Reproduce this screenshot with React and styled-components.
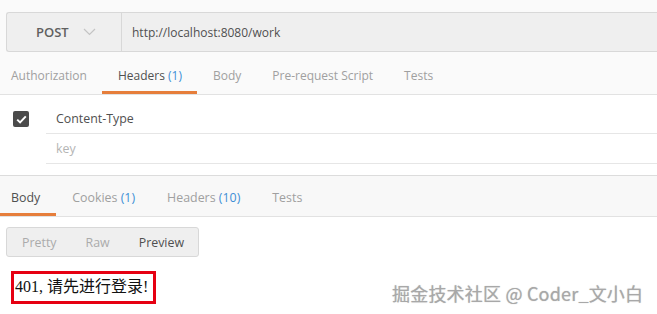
import React from "react";
import styled, { createGlobalStyle } from "styled-components";

const GlobalStyle = createGlobalStyle`
  html, body {
    margin: 0;
    padding: 0;
    background: #ffffff;
  }
  body {
    font-family: "Open Sans", "Noto Sans CJK SC", sans-serif;
    font-size: 12px;
    color: #505050;
  }
`;

const Page = styled.div`
  position: relative;
  width: 657px;
  height: 314px;
  overflow: hidden;
  background: #ffffff;
`;

const TopArea = styled.div`
  background: #fafafa;
  padding-top: 12px;
`;

const RequestBar = styled.div`
  display: flex;
  height: 38px;
  margin-left: 6px;
  background: #efefef;
  border-top: 1px solid #d8d8d8;
  border-bottom: 1px solid #d8d8d8;
  border-left: 1px solid #d8d8d8;
  border-radius: 3px 0 0 3px;
`;

const MethodSelect = styled.div`
  display: flex;
  align-items: center;
  gap: 14px;
  width: 115px;
  box-sizing: border-box;
  padding-left: 29px;
  border-right: 1px solid #d8d8d8;
  font-size: 13px;
  font-weight: 600;
  color: #606060;
`;

const UrlField = styled.div`
  display: flex;
  align-items: center;
  padding-left: 10px;
  font-size: 12px;
  color: #505050;
`;

const TabBar = styled.div`
  display: flex;
  margin-top: 3px;
  background: ${p => (p.$response ? "#f8f8f8" : "#fafafa")};
  border-top: ${p => (p.$response ? "1px solid #dcdcdc" : "none")};
  border-bottom: 1px solid #e2e2e2;
`;

const Tab = styled.div`
  padding: ${p => (p.$response ? "14px 16px 7px" : "13px 15.5px 7px")};
  line-height: 16px;
  font-size: ${p => (p.$response ? "12.4px" : "12px")};
  color: ${p => (p.$active ? "#505050" : "#a0a0a0")};
  border-bottom: 3px solid ${p => (p.$active ? "#e67e3b" : "transparent")};
  white-space: nowrap;

  &:first-child {
    padding-left: 11px;
  }
`;

const Count = styled.span`
  color: #3d8fd6;
`;

const HeaderTable = styled.div`
  margin-top: 9px;
`;

const HeaderRow = styled.div`
  display: flex;
  height: 30px;
`;

const CheckCell = styled.div`
  display: flex;
  align-items: center;
  width: 46px;
  padding-left: 13px;
  box-sizing: border-box;
`;

const Checkbox = styled.div`
  display: flex;
  align-items: center;
  justify-content: center;
  width: 16px;
  height: 16px;
  border-radius: 2px;
  background: #4b4b4b;
`;

const KeyCell = styled.div`
  flex: 1;
  display: flex;
  align-items: center;
  padding-left: 10px;
  border-bottom: 1px solid #e6e6e6;
  font-size: 12.4px;
  color: ${p => (p.$placeholder ? "#b4b4b4" : "#505050")};
`;

const ResponseArea = styled.div`
  margin-top: 11px;
`;

const ToggleGroup = styled.div`
  display: inline-flex;
  margin: 10px 0 0 6px;
  height: 28px;
  background: #efefef;
  border: 1px solid #d8d8d8;
  border-radius: 3px;
`;

const ToggleButton = styled.div`
  display: flex;
  align-items: center;
  padding: 0 14px 0 15px;
  font-size: 12.4px;
  color: ${p => (p.$active ? "#505050" : "#ababab")};
`;

const ResultBox = styled.div`
  display: inline-block;
  margin: 14px 0 0 11px;
  padding: 3px 5px 4px 1px;
  border: 3px solid #e60012;
  font-family: "Liberation Serif", "Noto Sans CJK SC", serif;
  font-size: 16px;
  line-height: 20px;
  color: #111111;
`;

const Watermark = styled.div`
  position: absolute;
  left: 392px;
  top: 281px;
  font-family: "Noto Sans CJK SC", sans-serif;
  font-size: 18px;
  line-height: 24px;
  letter-spacing: 0.2px;
  color: #a8a8a8;
  text-shadow: 0 0 1px rgba(90, 90, 90, 0.4);
`;

const Chevron = () => (
  <svg width="13" height="8" viewBox="0 0 13 8" fill="none">
    <path d="M1 1l5.5 5.5L12 1" stroke="#c4c4c4" strokeWidth="1.2" />
  </svg>
);

const Check = () => (
  <svg width="11" height="9" viewBox="0 0 11 9" fill="none">
    <path d="M1.2 4.6l2.9 2.8L9.8 1.4" stroke="#ffffff" strokeWidth="2" />
  </svg>
);

const requestTabs = [
  { label: "Authorization" },
  { label: "Headers", count: 1, active: true },
  { label: "Body" },
  { label: "Pre-request Script" },
  { label: "Tests" }
];

const responseTabs = [
  { label: "Body", active: true },
  { label: "Cookies", count: 1 },
  { label: "Headers", count: 10 },
  { label: "Tests" }
];

const App = () => (
  <Page>
    <GlobalStyle />
    <TopArea>
      <RequestBar>
        <MethodSelect>
          POST
          <Chevron />
        </MethodSelect>
        <UrlField>http://localhost:8080/work</UrlField>
      </RequestBar>
      <TabBar>
        {requestTabs.map(t => (
          <Tab key={t.label} $active={t.active}>
            {t.label}
            {t.count !== undefined && <Count> ({t.count})</Count>}
          </Tab>
        ))}
      </TabBar>
    </TopArea>

    <HeaderTable>
      <HeaderRow>
        <CheckCell>
          <Checkbox>
            <Check />
          </Checkbox>
        </CheckCell>
        <KeyCell>Content-Type</KeyCell>
      </HeaderRow>
      <HeaderRow>
        <CheckCell />
        <KeyCell $placeholder>key</KeyCell>
      </HeaderRow>
    </HeaderTable>

    <ResponseArea>
      <TabBar $response>
        {responseTabs.map(t => (
          <Tab key={t.label} $response $active={t.active}>
            {t.label}
            {t.count !== undefined && <Count> ({t.count})</Count>}
          </Tab>
        ))}
      </TabBar>
      <ToggleGroup>
        <ToggleButton>Pretty</ToggleButton>
        <ToggleButton>Raw</ToggleButton>
        <ToggleButton $active>Preview</ToggleButton>
      </ToggleGroup>
      <div>
        <ResultBox>401, 请先进行登录!</ResultBox>
      </div>
    </ResponseArea>

    <Watermark>掘金技术社区 @ Coder_文小白</Watermark>
  </Page>
);

export default App;
